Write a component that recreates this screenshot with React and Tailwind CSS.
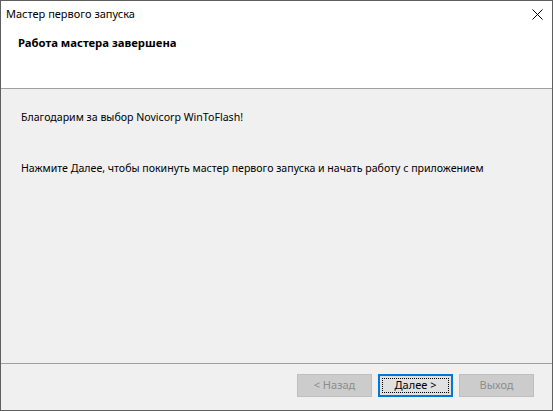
import React from "react";

const font = { fontFamily: "'Segoe UI', 'Noto Sans', 'Open Sans', sans-serif" };

const CloseIcon = () => (
  <svg width="11" height="11" viewBox="0 0 11 11" className="block">
    <path d="M0.5 0.5 L10.5 10.5 M10.5 0.5 L0.5 10.5" stroke="#000" strokeWidth="1" fill="none" />
  </svg>
);

const WizardButton = ({ children, disabled }) => {
  if (disabled) {
    return (
      <div className="w-[75px] h-[23px] flex items-center justify-center bg-[#cccccc] border border-[#bfbfbf] text-[11px] text-[#8d8d8d]">
        {children}
      </div>
    );
  }
  return (
    <div className="w-[75px] h-[23px] flex items-center justify-center bg-[#e1e1e1] border-2 border-[#0078d7] text-[11px] text-black">
      <div className="w-[67px] h-[15px] flex items-center justify-center border border-dotted border-[#000]">
        {children}
      </div>
    </div>
  );
};

export default function App() {
  return (
    <div
      className="w-[553px] h-[411px] border border-[#5f5f5f] bg-[#f0f0f0] flex flex-col text-black"
      style={font}
    >
      {/* title bar */}
      <div className="h-[26px] bg-white flex items-center justify-between pl-[5px] pr-[9px]">
        <div className="text-[11px] leading-[14px]">Мастер первого запуска</div>
        <CloseIcon />
      </div>

      {/* header */}
      <div className="h-[62px] bg-white border-b border-[#a0a0a0] pl-[17px] pt-[9px]">
        <div className="text-[11.3px] font-bold leading-[14px]">Работа мастера завершена</div>
      </div>

      {/* content */}
      <div className="flex-1 pl-[20px] pt-[21px] flex flex-col gap-[37px] text-[10.6px] leading-[14px]">
        <p>Благодарим за выбор Novicorp WinToFlash!</p>
        <p>Нажмите Далее, чтобы покинуть мастер первого запуска и начать работу с приложением</p>
      </div>

      {/* footer */}
      <div className="h-[47px] border-t border-[#a0a0a0] flex items-start justify-end pt-[10px] pr-[18px] gap-[6px]">
        <WizardButton disabled>&lt; Назад</WizardButton>
        <WizardButton>Далее &gt;</WizardButton>
        <WizardButton disabled>Выход</WizardButton>
      </div>
    </div>
  );
}
